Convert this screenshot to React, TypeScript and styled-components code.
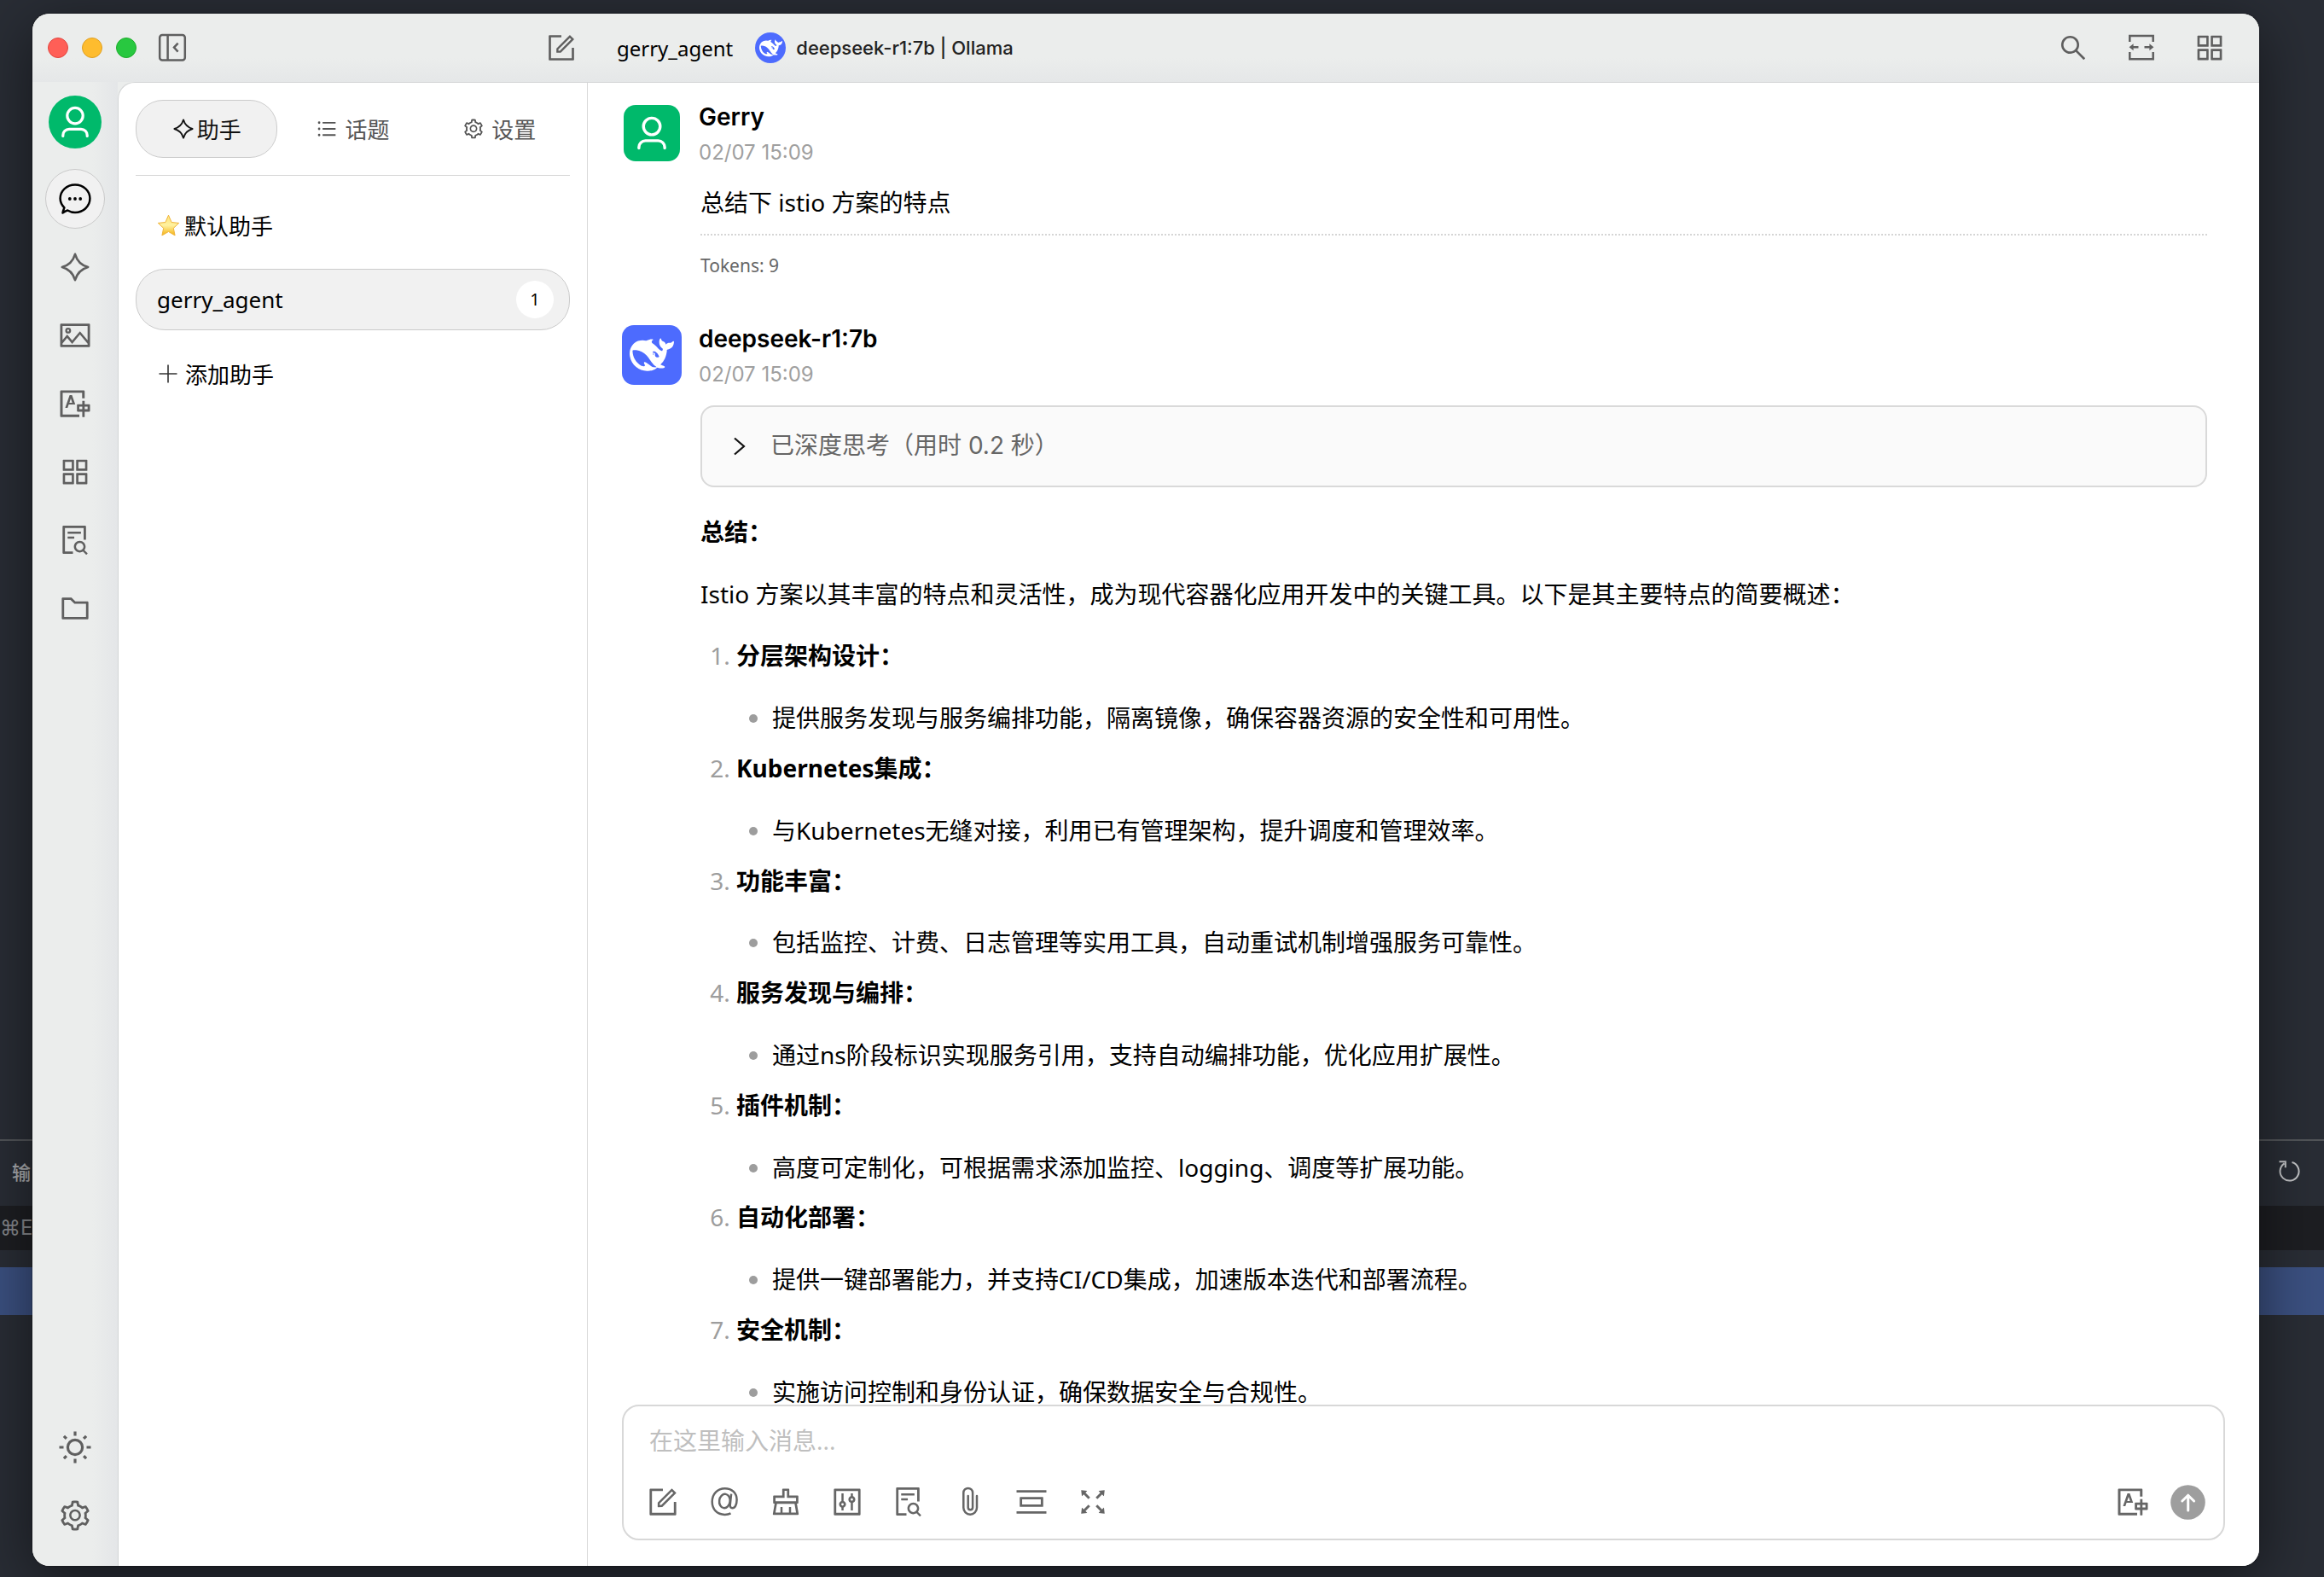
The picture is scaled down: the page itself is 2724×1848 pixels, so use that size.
import React from "react";
import styled, { createGlobalStyle } from "styled-components";
import {
  AiOutlineAppstore,
  AiOutlineBars,
  AiOutlineClear,
  AiOutlineControl,
  AiOutlineFileSearch,
  AiOutlineFolder,
  AiOutlineForm,
  AiOutlineFullscreen,
  AiOutlinePicCenter,
  AiOutlinePicture,
  AiOutlineSearch,
  AiOutlineSetting,
  AiOutlineTranslation,
} from "react-icons/ai";

const bodyFont = `"Noto Sans", "Noto Sans CJK SC", sans-serif`;
const uiFont = `Inter, "Noto Sans CJK SC", sans-serif`;

const GlobalStyle = createGlobalStyle`
  *, *::before, *::after { box-sizing: border-box; }
  body { margin: 0; background: #292d35; font-family: ${bodyFont}; color: #000; }
  button, textarea { font: inherit; color: inherit; margin: 0; padding: 0; border: 0; background: none; }
  button { cursor: pointer; }
  svg { display: block; flex: none; }
`;

/* ---------- Desktop and the editor behind the window ---------- */

const Desktop = styled.div`
  display: grid;
  grid-template: 100vh / 100%;
  overflow: hidden;
`;

const Backdrop = styled.div`
  grid-area: 1 / 1;
  display: flex;
  flex-direction: column;
  background: #292d35;
  overflow: hidden;
`;

const BackdropFill = styled.div`
  flex: 1;
`;

const BackdropBar = styled.div`
  display: flex;
  justify-content: space-between;
  align-items: center;
  height: 78px;
  padding: 0 28px 6px 14px;
  border-top: 2px solid #515458;
  color: #a9abae;
  font-size: 22px;
  font-weight: 500;
`;

const BackdropHint = styled.div`
  height: 52px;
  background: #1d1e22;
  color: #85878b;
  font-family: Inter, "DejaVu Sans", sans-serif;
  font-size: 24px;
  line-height: 52px;
`;

const BackdropSelection = styled.div`
  height: 56px;
  margin: 20px 0 307px;
  background: #3b5080;
`;

/* ---------- Window ---------- */

const WindowArea = styled.div`
  grid-area: 1 / 1;
  display: flex;
  min-height: 0;
  padding: 16px 76px 13px 38px;
`;

const Window = styled.div`
  flex: 1;
  display: flex;
  flex-direction: column;
  min-width: 0;
  border-radius: 20px;
  overflow: hidden;
  background: #ebedec;
  box-shadow: 0 16px 70px rgba(0, 0, 0, 0.5), 0 0 2px rgba(0, 0, 0, 0.7);
`;

const TitleBar = styled.header`
  display: flex;
  height: 80px;
  flex: none;
  background: linear-gradient(#ebedec 65%, #e5e7e8);
`;

const TitleLeft = styled.div`
  width: 651px;
  display: flex;
  align-items: center;
  gap: 22px;
  padding: 0 11px 0 18px;
`;

const Lights = styled.div`
  display: flex;
  gap: 16px;
`;

const Light = styled.button<{ $fill: string; $edge: string }>`
  width: 24px;
  height: 24px;
  border-radius: 50%;
  background: ${(p) => p.$fill};
  border: 1px solid ${(p) => p.$edge};
`;

const TitleButton = styled.button<{ $push?: boolean }>`
  display: flex;
  align-items: center;
  justify-content: center;
  width: 40px;
  height: 40px;
  color: #5f5f5f;
  ${(p) => p.$push && "margin-left: auto;"}
`;

const TitleRight = styled.div`
  flex: 1;
  display: flex;
  align-items: center;
  gap: 26px;
  padding: 0 38px 0 34px;
`;

const AgentName = styled.span`
  font-size: 24px;
`;

const ModelButton = styled.button`
  display: flex;
  align-items: center;
  gap: 12px;
  font-family: ${uiFont};
  font-size: 22px;
  font-weight: 500;
  color: #222;
`;

const TitleTools = styled.div`
  display: flex;
  gap: 40px;
  margin-left: auto;
`;

const Body = styled.div`
  flex: 1;
  display: flex;
  min-height: 0;
`;

/* ---------- Navigation rail ---------- */

const Rail = styled.nav`
  width: 100px;
  flex: none;
  display: flex;
  flex-direction: column;
  align-items: center;
  gap: 10px;
  padding: 16px 0 24px;
  background: linear-gradient(90deg, #ebedec 70%, #e4e6e8);
`;

const RailAvatar = styled.button`
  width: 62px;
  height: 62px;
  margin-bottom: 14px;
  border-radius: 50%;
  background: #00b96b;
`;

const RailButton = styled.button<{ $active?: boolean }>`
  display: flex;
  align-items: center;
  justify-content: center;
  width: 70px;
  height: 70px;
  border-radius: 50%;
  border: 1px solid ${(p) => (p.$active ? "#c9c9c9" : "transparent")};
  background: ${(p) => (p.$active ? "#f1f1f1" : "transparent")};
  color: ${(p) => (p.$active ? "#000" : "#5f5f5f")};
`;

const RailSpacer = styled.div`
  flex: 1;
`;

/* ---------- Assistants pane ---------- */

const Panel = styled.div`
  flex: 1;
  display: flex;
  min-width: 0;
  background: #fff;
  border-top: 1px solid #d3d5d6;
  border-left: 1px solid #d3d5d6;
  border-top-left-radius: 20px;
  overflow: hidden;
`;

const Assistants = styled.aside`
  width: 550px;
  flex: none;
  padding: 20px;
  border-right: 1px solid #d9d9d9;
`;

const Tabs = styled.div`
  display: grid;
  grid-template-columns: repeat(3, 1fr);
  gap: 6px;
  padding-bottom: 20px;
  border-bottom: 1px solid #d5d5d5;
`;

const Tab = styled.button<{ $active?: boolean; $gap: number }>`
  display: flex;
  align-items: center;
  justify-content: center;
  gap: ${(p) => p.$gap}px;
  height: 68px;
  border-radius: 32px;
  border: 1px solid ${(p) => (p.$active ? "#cbcbcb" : "transparent")};
  background: ${(p) => (p.$active ? "#f1f1f1" : "transparent")};
  color: ${(p) => (p.$active ? "#111" : "#555")};
  font-size: 26px;
`;

const AssistantList = styled.div`
  display: flex;
  flex-direction: column;
  gap: 15px;
  padding-top: 22px;
`;

const AssistantRow = styled.button<{ $active?: boolean; $gap?: number }>`
  display: flex;
  align-items: center;
  gap: ${(p) => p.$gap ?? 0}px;
  height: 72px;
  padding: 0 18px 0 24px;
  border-radius: 34px;
  border: 1px solid ${(p) => (p.$active ? "#cbcbcb" : "transparent")};
  background: ${(p) => (p.$active ? "#f1f1f1" : "transparent")};
  font-size: 26px;
`;

const Count = styled.span`
  width: 44px;
  height: 44px;
  margin-left: auto;
  border-radius: 50%;
  background: #fff;
  font-size: 20px;
  line-height: 44px;
  text-align: center;
`;

/* ---------- Chat ---------- */

const Chat = styled.main`
  flex: 1;
  display: flex;
  flex-direction: column;
  min-width: 0;
`;

const Messages = styled.div`
  flex: 1;
  min-height: 0;
  overflow: hidden;
  display: flex;
  flex-direction: column;
  gap: 50px;
  padding: 19px 61px 0 40px;
`;

const Message = styled.article`
  flex: none;
`;

const MessageHead = styled.div`
  display: flex;
  gap: 20px;
`;

const AvatarSlot = styled.div`
  display: flex;
  align-items: center;
  justify-content: center;
  width: 70px;
  height: 70px;
  margin-top: 5px;
`;

const Avatar = styled.div<{ $size: number; $color: string; $round?: boolean }>`
  display: flex;
  align-items: center;
  justify-content: center;
  width: ${(p) => p.$size}px;
  height: ${(p) => p.$size}px;
  border-radius: ${(p) => (p.$round ? "50%" : "14px")};
  background: ${(p) => p.$color};
`;

const Author = styled.div`
  font-family: ${uiFont};
  font-size: 28px;
  font-weight: 600;
  line-height: 42px;
`;

const Time = styled.time`
  display: block;
  font-family: ${uiFont};
  font-size: 24px;
  line-height: 42px;
  color: #a0a0a0;
`;

const MessageBody = styled.div`
  margin: 15px 0 0 92px;
  font-size: 28px;
  line-height: 1.6;
`;

const Paragraph = styled.p`
  margin: 0 0 28px;
`;

const Tokens = styled.div`
  margin-top: 14px;
  padding-top: 20px;
  border-top: 2px dotted #d5d5d5;
  font-size: 21px;
  line-height: 30px;
  color: #666;
`;

const Thinking = styled.button`
  display: flex;
  align-items: center;
  gap: 26px;
  width: 100%;
  height: 96px;
  margin-bottom: 30px;
  padding: 0 34px;
  border: 2px solid #d9d9d9;
  border-radius: 16px;
  background: #fafafa;
  font-family: ${uiFont};
  color: #666;
`;

const Features = styled.ol`
  margin: 0;
  padding-left: 42px;
  > li { margin-bottom: 14px; }
  li::marker { color: #9d9d9d; }
`;

const Points = styled.ul`
  margin: 28px 0 0;
  padding-left: 42px;
  list-style: disc;
`;

/* ---------- Composer ---------- */

const Composer = styled.form`
  flex: none;
  margin: 0 40px 30px;
  padding: 18px 12px 13px 16px;
  border: 2px solid #d8d8d8;
  border-radius: 20px;
`;

const Input = styled.textarea`
  display: block;
  width: 100%;
  height: 44px;
  padding: 0 14px;
  resize: none;
  outline: none;
  overflow: hidden;
  font-size: 28px;
  line-height: 44px;
  &::placeholder { color: #bfbfbf; }
`;

const Toolbar = styled.div`
  display: flex;
  justify-content: space-between;
  margin-top: 20px;
`;

const ToolGroup = styled.div<{ $gap: number }>`
  display: flex;
  gap: ${(p) => p.$gap}px;
`;

const ToolButton = styled.button`
  display: flex;
  align-items: center;
  justify-content: center;
  width: 60px;
  height: 60px;
  color: #666;
`;

/* ---------- Drawings ---------- */

type Stroke = React.SVGProps<SVGSVGElement>;

const Line = ({ children, ...rest }: Stroke) => (
  <svg width="40" height="40" viewBox="0 0 40 40" fill="none" stroke="currentColor" strokeWidth="2.5" {...rest}>
    {children}
  </svg>
);

const PersonIcon = ({ size }: { size: number }) => (
  <svg width={size} height={size} viewBox="0 0 62 62" fill="none" stroke="#fff" strokeWidth="3.2" strokeLinecap="round">
    <circle cx="31" cy="23.6" r="9.2" />
    <path d="M16.8 47.4v-.9a7.2 7.2 0 0 1 7.2-7.2h14a7.2 7.2 0 0 1 7.2 7.2v.9" />
  </svg>
);

const WhaleIcon = ({ size }: { size: number }) => (
  <svg width={size} height={size} viewBox="0 0 24 24" fill="#fff">
    <path d="M23.748 4.482c-.254-.124-.364.113-.512.234-.051.039-.094.09-.137.136-.372.397-.806.657-1.373.626-.829-.046-1.537.214-2.163.848-.133-.782-.575-1.248-1.247-1.548-.352-.156-.708-.311-.955-.65-.172-.241-.219-.51-.305-.774-.055-.16-.11-.323-.293-.35-.2-.031-.278.136-.356.276-.313.572-.434 1.202-.422 1.84.027 1.436.633 2.58 1.838 3.393.137.093.172.187.129.323-.082.28-.18.552-.266.833-.055.179-.137.217-.329.14a5.526 5.526 0 01-1.736-1.18c-.857-.828-1.631-1.742-2.597-2.458a11.365 11.365 0 00-.689-.471c-.985-.957.13-1.743.388-1.836.27-.098.093-.432-.779-.428-.872.004-1.67.295-2.687.684a3.055 3.055 0 01-.465.137 9.597 9.597 0 00-2.883-.102c-1.885.21-3.39 1.102-4.497 2.623C.082 8.606-.231 10.684.152 12.85c.403 2.284 1.569 4.175 3.36 5.653 1.858 1.533 3.997 2.284 6.438 2.14 1.482-.085 3.133-.284 4.994-1.86.47.234.962.327 1.78.397.63.059 1.236-.03 1.705-.128.735-.156.684-.837.419-.961-2.155-1.004-1.682-.595-2.113-.926 1.096-1.296 2.746-2.642 3.392-7.003.05-.347.007-.565 0-.845-.004-.17.035-.237.23-.256a4.173 4.173 0 001.545-.475c1.396-.763 1.96-2.015 2.093-3.517.02-.23-.004-.467-.247-.588zM11.581 18c-2.089-1.642-3.102-2.183-3.52-2.16-.392.024-.321.471-.235.763.09.288.207.486.371.739.114.167.192.416-.113.603-.673.416-1.842-.14-1.897-.167-1.361-.802-2.5-1.86-3.301-3.307-.774-1.393-1.224-2.887-1.298-4.482-.02-.386.093-.522.477-.592a4.696 4.696 0 011.529-.039c2.132.312 3.946 1.265 5.468 2.774.868.86 1.525 1.887 2.202 2.891.72 1.066 1.494 2.082 2.48 2.914.348.292.625.514.891.677-.802.09-2.14.11-3.054-.614zm1-6.44a.306.306 0 01.415-.287.302.302 0 01.2.288.306.306 0 01-.31.307.303.303 0 01-.304-.308zm3.11 1.596c-.2.081-.399.151-.59.16a1.245 1.245 0 01-.798-.254c-.274-.23-.47-.358-.552-.758a1.73 1.73 0 01.016-.588c.07-.327-.008-.537-.239-.727-.187-.156-.426-.199-.688-.199a.559.559 0 01-.254-.078c-.11-.054-.2-.19-.114-.358.028-.054.16-.186.192-.21.356-.202.767-.136 1.146.016.352.144.618.408 1.001.782.391.451.462.576.685.914.176.265.336.537.445.848.067.195-.019.354-.25.452z" />
  </svg>
);

const CollapseIcon = () => (
  <Line>
    <rect x="5.2" y="5" width="29.6" height="29.6" rx="3" />
    <path d="M14.6 5v29.6" />
    <path d="M26.6 14.6 22 19.6l4.6 5" />
  </Line>
);

const WidthIcon = () => (
  <Line>
    <path d="M6.3 13V6h27.4v7M6.3 25v8.3h27.4V25" />
    <path d="M9 19.3h7.5M23.5 19.3H31" />
    <path d="m5.6 19.3 5-4v8zM34.4 19.3l-5-4v8z" fill="currentColor" stroke="none" />
  </Line>
);

const ChatIcon = () => (
  <Line>
    <path
      strokeLinejoin="round"
      d="M7.4 30.4C4.3 27.3 2.6 23.6 2.6 19.6 2.6 10.4 10.4 3.4 20 3.4s17.4 7 17.4 16.2S29.6 36 20 36c-3.4 0-6.2-.9-8.8-2.5-2 .6-3.7 1.6-5.7 3 .2-2.3 1.2-4 1.900-6.1Z"
    />
    <g fill="currentColor" stroke="none">
      <circle cx="13.8" cy="20" r="1.9" />
      <circle cx="20" cy="20" r="1.9" />
      <circle cx="26.2" cy="20" r="1.9" />
    </g>
  </Line>
);

const SparkleIcon = ({ size = 40, weight = 2.6 }: { size?: number; weight?: number }) => (
  <Line width={size} height={size} strokeWidth={weight} strokeLinejoin="round">
    <path d="M20 4.8C22.2 12.6 27.4 17.8 35.2 20 27.4 22.2 22.2 27.4 20 35.2 17.8 27.4 12.6 22.2 4.8 20 12.6 17.8 17.8 12.6 20 4.8Z" />
  </Line>
);

const SunIcon = () => (
  <Line strokeWidth="3.2">
    <circle cx="20" cy="20" r="8.6" />
    <path d="M20 1.5v5M20 33.5v5M1.5 20h5M33.5 20h5M6.900 6.900l3 3M30.100 30.100l3 3M6.900 33.100l3-3M30.100 9.900l3-3" />
  </Line>
);

const AtIcon = () => (
  <Line>
    <path d="M27.5 33.3c-2 1.1-4.5 1.6-7 1.6C11.5 34.9 5.7 28.8 5.7 19.8 5.7 10.8 12 4.2 20.6 4.2c8.4 0 14 5.4 14 13.4 0 5.8-2.2 9.6-5.2 9.6-2 0-2.9-1.5-2.6-4.2l1.3-12.4" />
    <ellipse cx="20.4" cy="19" rx="6.3" ry="8.2" transform="rotate(8 20.4 19)" />
  </Line>
);

const ClipIcon = () => (
  <Line>
    <path
      strokeLinecap="round"
      d="M23.6 12.500V26.200a2.700 2.700 0 0 1-5.400 0V12.600M28.500 12.600V26.500a7.800 7.800 0 0 1-15.700 0V9a5.300 5.300 0 0 1 10.800 0v4"
      transform="translate(-.5 .3)"
    />
  </Line>
);

const StarIcon = () => (
  <svg width="28" height="26" viewBox="0 0 28 26">
    <defs>
      <linearGradient id="star" x1="0" y1="0" x2="0" y2="1">
        <stop offset="0" stopColor="#fde27a" />
        <stop offset="0.5" stopColor="#fff2a0" />
        <stop offset="1" stopColor="#f5b312" />
      </linearGradient>
    </defs>
    <path
      d="m13.500 1.200 3.600 8.300 8.600.9-6.400 6 1.800 8.500-7.600-4.400-7.600 4.400 1.800-8.500-6.400-6 8.600-.9z"
      fill="url(#star)"
      stroke="#f0b43a"
      strokeWidth="1"
      strokeLinejoin="round"
    />
  </svg>
);

const PlusIcon = () => (
  <svg width="24" height="24" viewBox="0 0 24 24" fill="none" stroke="#333" strokeWidth="1.6">
    <path d="M13 1.500v21M2.500 12h21" />
  </svg>
);

const ChevronIcon = () => (
  <svg width="20" height="24" viewBox="0 0 20 24" fill="none" stroke="#111" strokeWidth="2.2">
    <path d="m4 2.500 11 9.500-11 9.500" />
  </svg>
);

const SendIcon = () => (
  <svg width="41" height="41" viewBox="0 0 41 41" fill="none">
    <circle cx="20.5" cy="20.5" r="20.3" fill="#9e9e9e" />
    <path d="M20.7 30V12.500M13.800 19l6.900-6.800 6.900 6.800" stroke="#fff" strokeWidth="3" strokeLinecap="round" strokeLinejoin="round" />
  </svg>
);

const ReloadIcon = () => (
  <svg width="26" height="26" viewBox="0 0 26 26" fill="none" stroke="#c3c4c6" strokeWidth="2">
    <path d="M16.500 3A11 11 0 1 1 7.500 4.400M1.500 2.200h7.300v7" />
  </svg>
);

/* ---------- Content ---------- */

const railItems = [
  { label: "智能体", icon: <SparkleIcon /> },
  { label: "绘图", icon: <AiOutlinePicture size={40} /> },
  { label: "翻译", icon: <AiOutlineTranslation size={40} /> },
  { label: "小程序", icon: <AiOutlineAppstore size={40} /> },
  { label: "知识库", icon: <AiOutlineFileSearch size={40} /> },
  { label: "文件", icon: <AiOutlineFolder size={40} /> },
];

const tools = [
  { label: "新话题", icon: <AiOutlineForm size={40} /> },
  { label: "提及模型", icon: <AtIcon /> },
  { label: "清空", icon: <AiOutlineClear size={40} /> },
  { label: "参数", icon: <AiOutlineControl size={40} /> },
  { label: "知识库", icon: <AiOutlineFileSearch size={40} /> },
  { label: "附件", icon: <ClipIcon /> },
  { label: "清除上下文", icon: <AiOutlinePicCenter size={40} /> },
  { label: "展开", icon: <AiOutlineFullscreen size={40} /> },
];

const features = [
  ["分层架构设计：", "提供服务发现与服务编排功能，隔离镜像，确保容器资源的安全性和可用性。"],
  ["Kubernetes集成：", "与Kubernetes无缝对接，利用已有管理架构，提升调度和管理效率。"],
  ["功能丰富：", "包括监控、计费、日志管理等实用工具，自动重试机制增强服务可靠性。"],
  ["服务发现与编排：", "通过ns阶段标识实现服务引用，支持自动编排功能，优化应用扩展性。"],
  ["插件机制：", "高度可定制化，可根据需求添加监控、logging、调度等扩展功能。"],
  ["自动化部署：", "提供一键部署能力，并支持CI/CD集成，加速版本迭代和部署流程。"],
  ["安全机制：", "实施访问控制和身份认证，确保数据安全与合规性。"],
];

export default function App() {
  return (
    <>
      <GlobalStyle />
      <Desktop>
        <Backdrop>
          <BackdropFill />
          <BackdropBar>
            <span>输</span>
            <ReloadIcon />
          </BackdropBar>
          <BackdropHint>⌘E</BackdropHint>
          <BackdropSelection />
        </Backdrop>

        <WindowArea>
          <Window>
            <TitleBar>
              <TitleLeft>
                <Lights>
                  <Light aria-label="关闭" $fill="#ff5f57" $edge="#e2463f" />
                  <Light aria-label="最小化" $fill="#febc2e" $edge="#dfa023" />
                  <Light aria-label="缩放" $fill="#28c840" $edge="#1dad2b" />
                </Lights>
                <TitleButton aria-label="收起侧栏"><CollapseIcon /></TitleButton>
                <TitleButton aria-label="新建话题" $push><AiOutlineForm size={38} /></TitleButton>
              </TitleLeft>
              <TitleRight>
                <AgentName>gerry_agent</AgentName>
                <ModelButton>
                  <Avatar $size={36} $color="#4d6bfe" $round><WhaleIcon size={27} /></Avatar>
                  deepseek-r1:7b | Ollama
                </ModelButton>
                <TitleTools>
                  <TitleButton aria-label="搜索"><AiOutlineSearch size={36} /></TitleButton>
                  <TitleButton aria-label="宽度"><WidthIcon /></TitleButton>
                  <TitleButton aria-label="小程序"><AiOutlineAppstore size={40} /></TitleButton>
                </TitleTools>
              </TitleRight>
            </TitleBar>

            <Body>
              <Rail>
                <RailAvatar aria-label="用户"><PersonIcon size={62} /></RailAvatar>
                <RailButton aria-label="聊天" $active><ChatIcon /></RailButton>
                {railItems.map((item) => (
                  <RailButton key={item.label} aria-label={item.label}>{item.icon}</RailButton>
                ))}
                <RailSpacer />
                <RailButton aria-label="主题"><SunIcon /></RailButton>
                <RailButton aria-label="设置"><AiOutlineSetting size={40} /></RailButton>
              </Rail>

              <Panel>
                <Assistants>
                  <Tabs>
                    <Tab $active $gap={2}><SparkleIcon size={28} weight={2.6} />助手</Tab>
                    <Tab $gap={8}><AiOutlineBars size={26} />话题</Tab>
                    <Tab $gap={8}><AiOutlineSetting size={26} />设置</Tab>
                  </Tabs>
                  <AssistantList>
                    <AssistantRow $gap={4}><StarIcon />默认助手</AssistantRow>
                    <AssistantRow $active>gerry_agent<Count>1</Count></AssistantRow>
                    <AssistantRow $gap={9}><PlusIcon />添加助手</AssistantRow>
                  </AssistantList>
                </Assistants>

                <Chat>
                  <Messages>
                    <Message>
                      <MessageHead>
                        <AvatarSlot>
                          <Avatar $size={66} $color="#00b96b"><PersonIcon size={66} /></Avatar>
                        </AvatarSlot>
                        <div>
                          <Author>Gerry</Author>
                          <Time>02/07 15:09</Time>
                        </div>
                      </MessageHead>
                      <MessageBody>
                        总结下 istio 方案的特点
                        <Tokens>Tokens: 9</Tokens>
                      </MessageBody>
                    </Message>

                    <Message>
                      <MessageHead>
                        <AvatarSlot>
                          <Avatar $size={70} $color="#4d6bfe"><WhaleIcon size={52} /></Avatar>
                        </AvatarSlot>
                        <div>
                          <Author>deepseek-r1:7b</Author>
                          <Time>02/07 15:09</Time>
                        </div>
                      </MessageHead>
                      <MessageBody>
                        <Thinking><ChevronIcon />已深度思考（用时 0.2 秒）</Thinking>
                        <Paragraph><strong>总结：</strong></Paragraph>
                        <Paragraph>
                          Istio 方案以其丰富的特点和灵活性，成为现代容器化应用开发中的关键工具。以下是其主要特点的简要概述：
                        </Paragraph>
                        <Features>
                          {features.map(([title, point]) => (
                            <li key={title}>
                              <strong>{title}</strong>
                              <Points><li>{point}</li></Points>
                            </li>
                          ))}
                        </Features>
                      </MessageBody>
                    </Message>
                  </Messages>

                  <Composer onSubmit={(e) => e.preventDefault()}>
                    <Input rows={1} aria-label="消息" placeholder="在这里输入消息..." />
                    <Toolbar>
                      <ToolGroup $gap={12}>
                        {tools.map((tool) => (
                          <ToolButton key={tool.label} type="button" aria-label={tool.label}>{tool.icon}</ToolButton>
                        ))}
                      </ToolGroup>
                      <ToolGroup $gap={4}>
                        <ToolButton type="button" aria-label="翻译"><AiOutlineTranslation size={40} /></ToolButton>
                        <ToolButton type="submit" aria-label="发送"><SendIcon /></ToolButton>
                      </ToolGroup>
                    </Toolbar>
                  </Composer>
                </Chat>
              </Panel>
            </Body>
          </Window>
        </WindowArea>
      </Desktop>
    </>
  );
}
